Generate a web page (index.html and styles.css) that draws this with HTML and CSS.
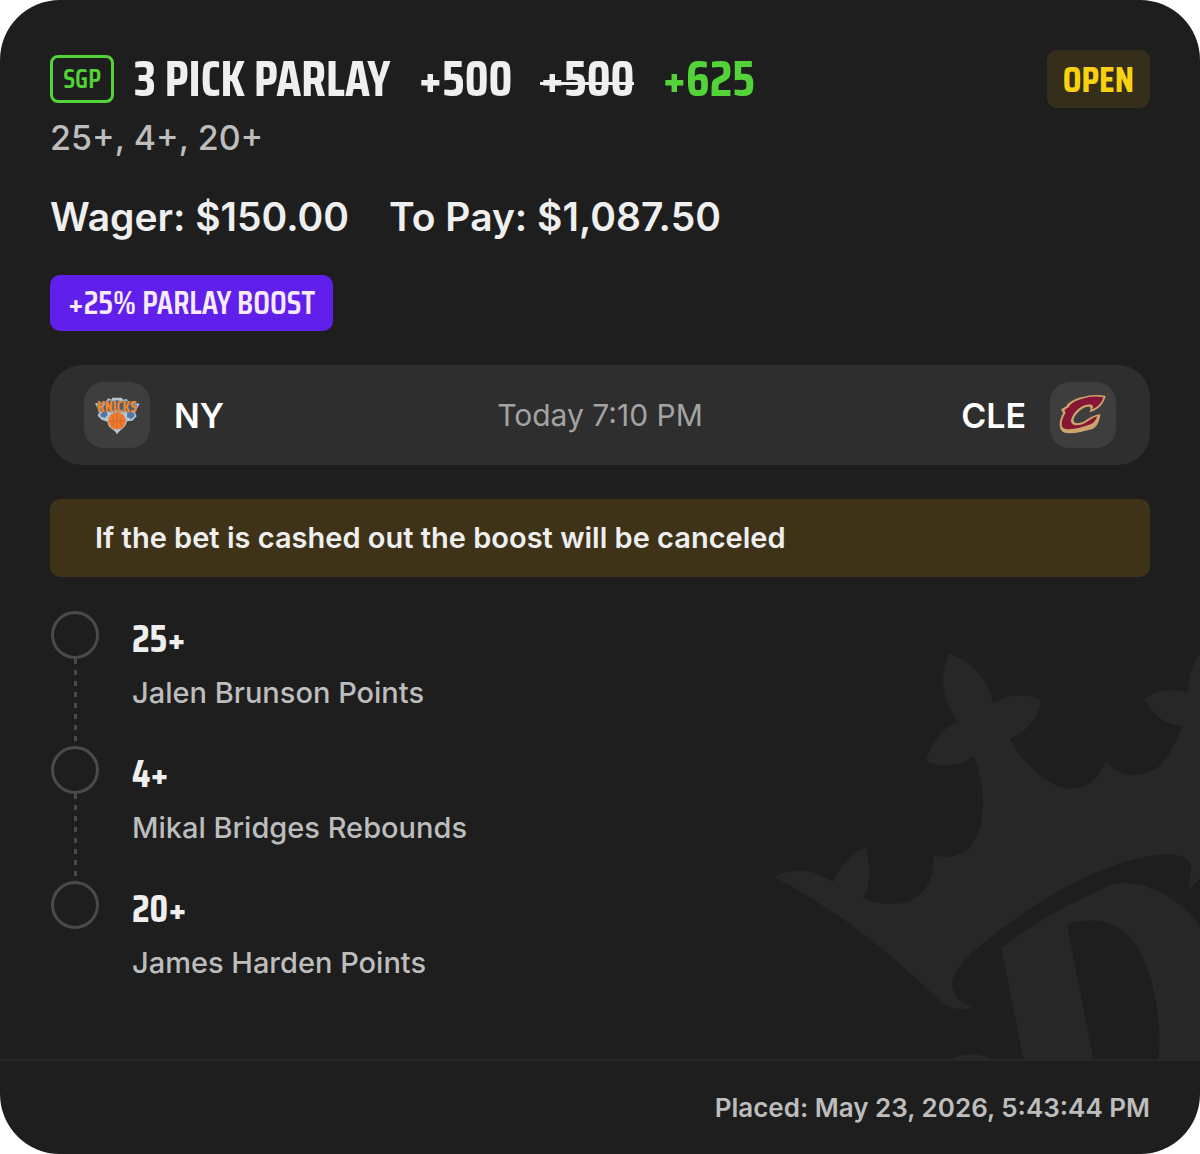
FILE: index.html
```html
<!DOCTYPE html>
<html lang="en">

<head>
    <meta charset="UTF-8">
    <meta name="viewport" content="width=device-width, initial-scale=1.0">
    <title>3 Pick Parlay</title>
    <link rel="stylesheet" href="styles.css">
</head>

<body>
    <article class="card">
        <div class="card-body">
            <!-- crown watermark -->
            <svg class="crown" viewBox="0 0 1320 1260" aria-hidden="true">
                <path d="M42 713C95 683 165 690 218 730C240 684 272 645 317 624C332 682 332 735 308 779C360 797 415 802 455 782C506 757 525 705 519 649C570 661 617 649 642 608C678 550 677 432 642 352C605 381 550 390 498 366C513 309 549 266 594 247C547 192 537 112 566 42C635 68 690 126 699 192C744 163 800 165 843 182C837 235 798 281 750 299C783 370 851 425 903 445C960 464 1021 423 1038 367C1080 418 1152 418 1195 384C1230 351 1250 305 1266 260C1220 259 1174 227 1153 180C1190 151 1240 147 1285 163C1282 115 1297 75 1320 45V718L1289 752C1278 735 1303 700 1288 669C1273 639 1190 638 1080 673C980 706 870 765 770 837C680 900 580 980 576 1030C575 1068 605 1097 640 1102C615 1115 575 1112 548 1094C475 1020 360 920 250 840C180 793 110 749 42 713Z" />
                <path fill-rule="evenodd" d="M724 926C835 840 945 785 1060 735C1160 718 1265 785 1320 862V1260H790ZM921 855L1000 1260H1196C1206 1140 1182 1010 1132 925C1090 850 1010 830 921 855Z" />
                <path d="M575 1260Q633 1230 690 1260Z" />
            </svg>

            <header class="card-header">
                <span class="sgp">SGP</span>
                <h1 class="title">3 PICK PARLAY</h1>
                <div class="odds">
                    <span>+500</span>
                    <s>+500</s>
                    <strong class="boosted">+625</strong>
                </div>
                <span class="status">OPEN</span>
            </header>
            <p class="summary">25+, 4+, 20+</p>

            <div class="amounts">
                <span>Wager: $150.00</span>
                <span>To Pay: $1,087.50</span>
            </div>

            <span class="boost">+25% PARLAY BOOST</span>

            <section class="game">
                <div class="team">
                    <svg class="team-logo" viewBox="0 0 198 198" role="img" aria-label="Knicks">
                        <path d="M33 64L63 61L73 49L82 53L85 47H113L117 53L128 51L135 62L167 65L153 91L158 103L145 116L129 118Q126 135 110 144L99 156L89 143Q73 137 70 119L53 113L41 101L46 90Z" fill="#b5c5d1" />
                        <path d="M39 68L56 65L53 83L47 91ZM160 69L145 66L147 85L153 88ZM50 94L68 90L71 99L62 108L49 103ZM130 90L151 94L152 102L142 111L129 105Z" fill="#54779d" />
                        <path d="M52 86L65 63L76 55L88 58L99 55L112 58L126 56L140 66L151 86L141 92L127 87L100 82L72 88L57 94Z" fill="#45627f" />
                        <circle cx="99" cy="117" r="26" fill="#ef792d" />
                        <path d="M99 91V143M73 117H125M82 98Q98 119 82 136M116 98Q100 119 116 136" fill="none" stroke="#c4652c" stroke-width="2" />
                        <path d="M78 136Q98 149 119 136L101 151L99 155L95 149Z" fill="#b5c5d1" />
                        <text class="wordmark" x="99" y="91" text-anchor="middle">KNICKS</text>
                    </svg>
                    <span>NY</span>
                </div>
                <time class="start">Today 7:10 PM</time>
                <div class="team">
                    <span>CLE</span>
                    <svg class="team-logo" viewBox="0 0 198 198" role="img" aria-label="Cavaliers">
                        <path d="M167 42C145 37 120 38 98 45C75 49 54 61 49 73L33 82L39 94C26 116 25 143 41 151C60 159 94 150 128 141C142 134 149 116 151 97C134 98 118 108 104 117C89 125 73 126 71 116C70 102 91 80 109 75C120 72 126 75 118 91C141 85 160 70 167 42Z" fill="#cba36c" />
                        <path d="M160 46C138 41 113 43 95 51C77 55 60 66 56 76L43 84L47 92C32 117 31 135 44 140C64 145 94 137 122 127C133 122 139 112 142 103C130 106 118 115 105 123C86 133 66 132 63 119C62 99 88 71 110 68C125 65 134 70 126 82C142 76 155 64 160 46Z" fill="#851634" />
                    </svg>
                </div>
            </section>

            <p class="notice">If the bet is cashed out the boost will be canceled</p>

            <ul class="legs">
                <li class="leg">
                    <span class="leg-track"></span>
                    <div>
                        <h2>25+</h2>
                        <p>Jalen Brunson Points</p>
                    </div>
                </li>
                <li class="leg">
                    <span class="leg-track"></span>
                    <div>
                        <h2>4+</h2>
                        <p>Mikal Bridges Rebounds</p>
                    </div>
                </li>
                <li class="leg">
                    <span class="leg-track"></span>
                    <div>
                        <h2>20+</h2>
                        <p>James Harden Points</p>
                    </div>
                </li>
            </ul>
        </div>
        <footer class="card-footer">Placed: May 23, 2026, 5:43:44 PM</footer>
    </article>
</body>

</html>
```
FILE: styles.css
```css
*,
*::before,
*::after {
    box-sizing: border-box;
}

body {
    margin: 0;
    font-family: Inter, "Liberation Sans", sans-serif;
    background-color: #fff;
    color: #efefef;
}

h1,
h2,
p,
ul {
    margin: 0;
    padding: 0;
}

.card {
    border-radius: 60px;
    background-color: #1e1e1e;
    overflow: hidden;
}

.card-body {
    position: relative;
    padding: 50px 50px 43px;
    border-bottom: 2px solid #272727;
}

/* sits behind the content in the corner */
.crown {
    position: absolute;
    right: 0;
    bottom: 0;
    width: 440px;
    height: 420px;
    fill: #272727;
}

.card-header {
    display: flex;
    align-items: center;
    height: 58px;
}

.sgp,
.title,
.odds,
.status,
.boost,
.leg h2 {
    font-family: "Saira Condensed", "Liberation Sans Narrow", "Roboto Condensed", "DejaVu Sans Condensed", sans-serif;
    font-weight: 700;
    white-space: nowrap;
}

.sgp {
    width: 64px;
    border: 3px solid #53d337;
    border-radius: 8px;
    color: #53d337;
    font-size: 27px;
    font-weight: 600;
    line-height: 42px;
    text-align: center;
}

.title {
    margin-left: 20px;
    font-size: 50px;
    line-height: 58px;
}

.odds {
    display: flex;
    gap: 28px;
    margin-left: 28px;
    font-size: 50px;
    line-height: 58px;
}

.odds s {
    position: relative;
    text-decoration: none;
}

/* strike line, level with the plus sign */
.odds s::after {
    content: "";
    position: absolute;
    top: 32px;
    left: 0;
    width: 100%;
    height: 3px;
    background-color: #efefef;
}

.boosted {
    color: #53d337;
    font-weight: 700;
}

.status {
    margin-left: auto;
    padding: 0 16px;
    border-radius: 10px;
    background-color: #352e1b;
    color: #f8d210;
    font-size: 37px;
    line-height: 58px;
}

.summary {
    margin-top: 10px;
    color: #bdbdbd;
    font-size: 34px;
    font-weight: 500;
    line-height: 40px;
}

.amounts {
    display: flex;
    gap: 40px;
    margin-top: 36px;
    font-size: 39px;
    font-weight: 600;
    line-height: 46px;
}

.boost {
    display: inline-block;
    margin-top: 35px;
    padding: 0 18px;
    border-radius: 10px;
    background-color: #611fec;
    color: #f7ebff;
    font-size: 33px;
    font-weight: 600;
    line-height: 56px;
    vertical-align: top;
}

.game {
    display: grid;
    grid-template-columns: 1fr auto 1fr;
    align-items: center;
    height: 100px;
    margin-top: 34px;
    padding: 0 34px;
    border-radius: 32px;
    background-color: #2e2e2e;
}

.team {
    display: flex;
    align-items: center;
    gap: 24px;
    color: #fff;
    font-size: 34px;
    font-weight: 600;
}

.team:last-child {
    justify-content: flex-end;
}

.team-logo {
    width: 66px;
    height: 66px;
    border-radius: 20px;
    background-color: #3e3e3e;
}

.wordmark {
    fill: #f58426;
    stroke: #45627f;
    stroke-width: 2px;
    paint-order: stroke;
    font-family: "Saira Condensed", "Liberation Sans Narrow", sans-serif;
    font-size: 46px;
    font-weight: 700;
}

.start {
    color: #a3a3a3;
    font-size: 30px;
}

.notice {
    margin-top: 34px;
    padding: 0 45px;
    border-radius: 10px;
    background-color: #3e3318;
    font-size: 29px;
    font-weight: 600;
    line-height: 78px;
}

.legs {
    position: relative;
    margin-top: 34px;
    list-style: none;
}

.leg {
    display: flex;
    gap: 32px;
    height: 135px;
}

.leg-track {
    display: flex;
    flex-direction: column;
    align-items: center;
    width: 50px;
}

.leg-track::before {
    content: "";
    width: 48px;
    height: 48px;
    border: 3px solid #4a4a4a;
    border-radius: 50%;
}

.leg:not(:last-child) .leg-track::after {
    content: "";
    flex: 1;
    width: 3px;
    background: repeating-linear-gradient(#4a4a4a 0 5px, transparent 5px 11px);
}

.leg h2 {
    margin-top: 8px;
    font-size: 39px;
    line-height: 40px;
}

.leg p {
    margin-top: 16px;
    color: #bdbdbd;
    font-size: 29px;
    font-weight: 500;
    line-height: 36px;
}

.card-footer {
    padding: 31px 50px 30px;
    color: #bdbdbd;
    font-size: 26px;
    font-weight: 600;
    line-height: 32px;
    text-align: right;
}
```
